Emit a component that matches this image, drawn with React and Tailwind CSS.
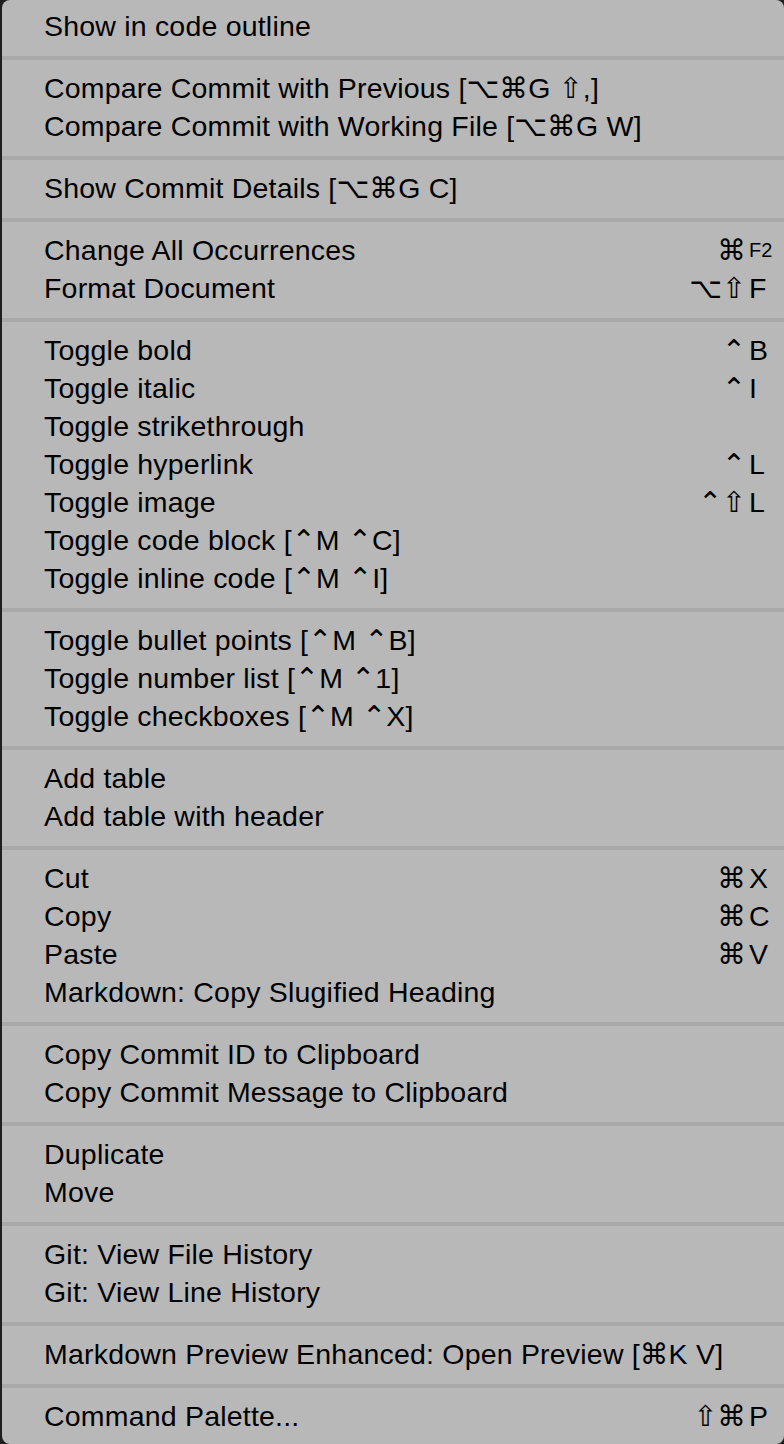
import React from 'react';

const groups = [
  [{ label: 'Show in code outline' }],
  [
    { label: 'Compare Commit with Previous [⌥⌘G ⇧,]' },
    { label: 'Compare Commit with Working File [⌥⌘G W]' },
  ],
  [{ label: 'Show Commit Details [⌥⌘G C]' }],
  [
    { label: 'Change All Occurrences', mod: '⌘', key: 'F2', small: true },
    { label: 'Format Document', mod: '⌥⇧', key: 'F' },
  ],
  [
    { label: 'Toggle bold', mod: '⌃', key: 'B' },
    { label: 'Toggle italic', mod: '⌃', key: 'I' },
    { label: 'Toggle strikethrough' },
    { label: 'Toggle hyperlink', mod: '⌃', key: 'L' },
    { label: 'Toggle image', mod: '⌃⇧', key: 'L' },
    { label: 'Toggle code block [⌃M ⌃C]' },
    { label: 'Toggle inline code [⌃M ⌃I]' },
  ],
  [
    { label: 'Toggle bullet points [⌃M ⌃B]' },
    { label: 'Toggle number list [⌃M ⌃1]' },
    { label: 'Toggle checkboxes [⌃M ⌃X]' },
  ],
  [{ label: 'Add table' }, { label: 'Add table with header' }],
  [
    { label: 'Cut', mod: '⌘', key: 'X' },
    { label: 'Copy', mod: '⌘', key: 'C' },
    { label: 'Paste', mod: '⌘', key: 'V' },
    { label: 'Markdown: Copy Slugified Heading' },
  ],
  [
    { label: 'Copy Commit ID to Clipboard' },
    { label: 'Copy Commit Message to Clipboard' },
  ],
  [{ label: 'Duplicate' }, { label: 'Move' }],
  [{ label: 'Git: View File History' }, { label: 'Git: View Line History' }],
  [{ label: 'Markdown Preview Enhanced: Open Preview [⌘K V]' }],
  [{ label: 'Command Palette...', mod: '⇧⌘', key: 'P' }],
];

const Item = ({ item }) => (
  <div className="flex items-center h-[38px] pl-[42px] pr-[11px]">
    <span className="flex-1 whitespace-nowrap tracking-[0.2px]">{item.label}</span>
    {item.key && (
      <span className="flex items-center">
        <span className="text-right">{item.mod}</span>
        <span className={`w-[24px] ml-[3px] ${item.small ? 'text-[20px]' : ''}`}>{item.key}</span>
      </span>
    )}
  </div>
);

export default function App() {
  return (
    <div className="w-[784px] h-[1444px] bg-[#1e1e1e] flex overflow-hidden">
      <div
        className="flex-1 ml-[2px] bg-[#b8b8b8] rounded-[8px] pt-[7px] text-black text-[28.5px] leading-[38px]"
        style={{ fontFamily: '"Liberation Sans", "DejaVu Sans", sans-serif' }}
      >
        {groups.map((g, i) => (
          <div key={i}>
            {i > 0 && <div className="mt-[11px] mb-[9px] h-[4px] bg-[#a9a9a9]" />}
            {g.map((item, j) => (
              <Item key={j} item={item} />
            ))}
          </div>
        ))}
      </div>
    </div>
  );
}
